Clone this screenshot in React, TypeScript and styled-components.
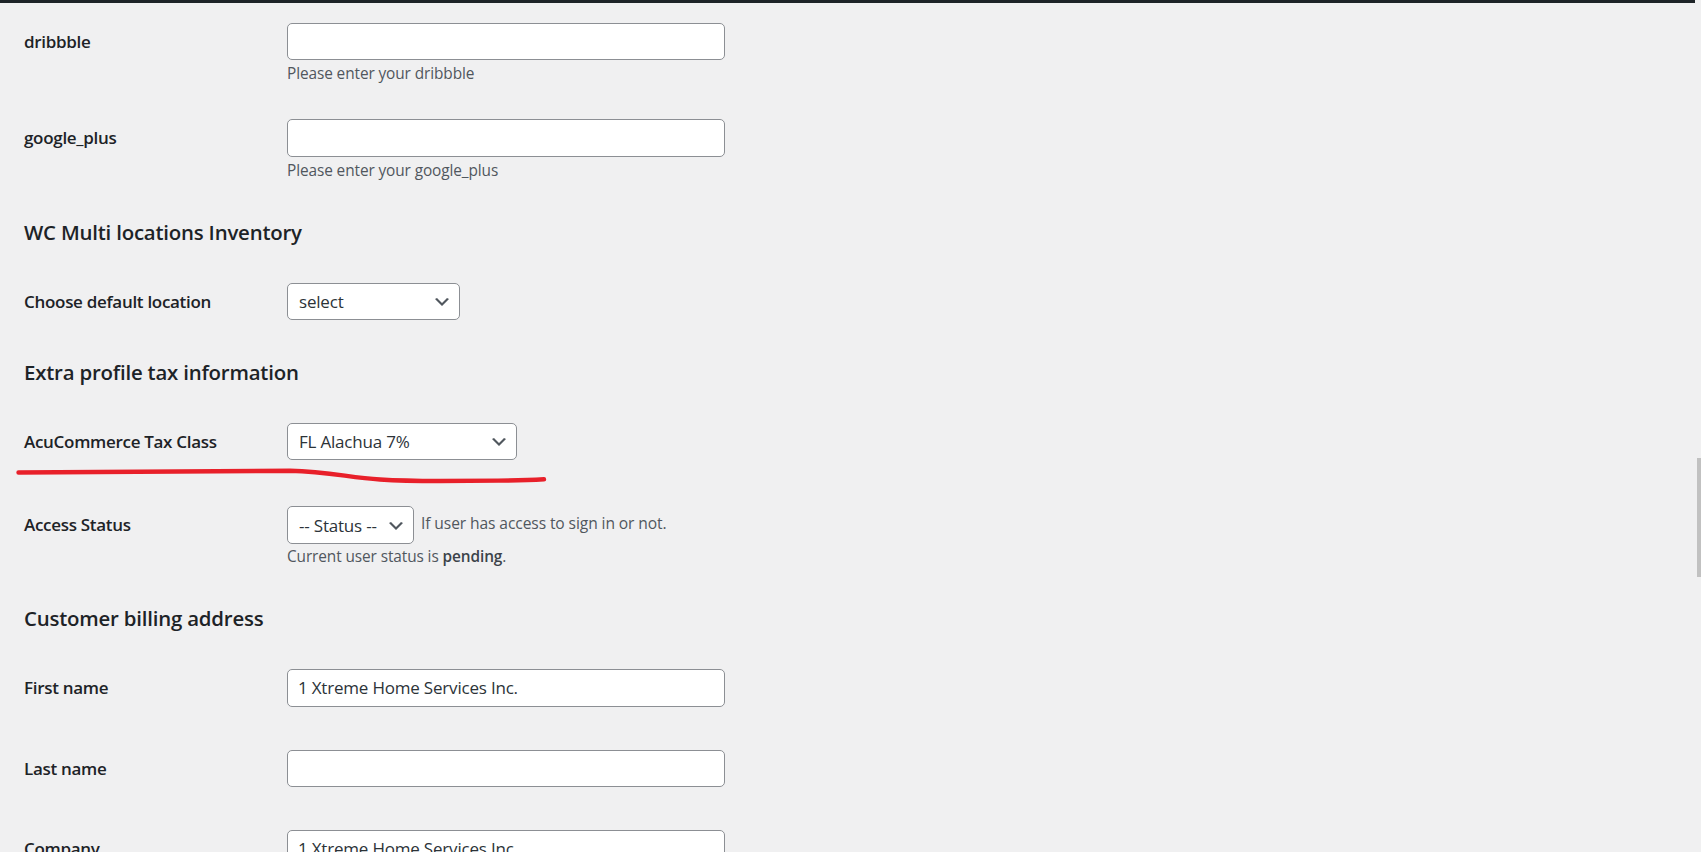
import styled, { createGlobalStyle } from "styled-components";

const GlobalStyle = createGlobalStyle`
  html, body {
    margin: 0;
    padding: 0;
    background: #f0f0f1;
    overflow: hidden;
  }
  body {
    font-family: "Open Sans", "Noto Sans", sans-serif;
    color: #1d2327;
  }
`;

const Chevron = () => (
  <svg width="20" height="20" viewBox="0 0 20 20" aria-hidden="true">
    <path d="M5 6l5 5 5-5 2 1-7 7-7-7 2-1z" fill="#50575e" />
  </svg>
);

export default function App() {
  return (
    <Page>
      <GlobalStyle />
      <AdminBarEdge />
      <Content>
        <Row $pt={19.5} $pb={15}>
          <Label>dribbble</Label>
          <Field>
            <TextInput type="text" defaultValue="" />
            <Description>Please enter your dribbble</Description>
          </Field>
        </Row>
        <Row $pt={19} $pb={17.25}>
          <Label>google_plus</Label>
          <Field>
            <TextInput type="text" defaultValue="" />
            <Description>Please enter your google_plus</Description>
          </Field>
        </Row>

        <SectionTitle>WC Multi locations Inventory</SectionTitle>
        <Row $pt={18.5} $pb={17.4}>
          <Label>Choose default location</Label>
          <Field>
            <SelectBox $width={173}>
              <span>select</span>
              <Chevron />
            </SelectBox>
          </Field>
        </Row>

        <SectionTitle>Extra profile tax information</SectionTitle>
        <Row $pt={19} $pb={18.5}>
          <Label>AcuCommerce Tax Class</Label>
          <Field>
            <SelectBox $width={230}>
              <span>FL Alachua 7%</span>
              <Chevron />
            </SelectBox>
          </Field>
        </Row>
        <Row $pt={17.5} $pb={15.5} $gap={8.4}>
          <Label>Access Status</Label>
          <Field>
            <ControlLine>
              <SelectBox $width={127} $height={38}>
                <span>-- Status --</span>
                <Chevron />
              </SelectBox>
              <InlineNote>If user has access to sign in or not.</InlineNote>
            </ControlLine>
            <StatusNote>
              Current user status is <strong>pending</strong>.
            </StatusNote>
          </Field>
        </Row>

        <SectionTitle>Customer billing address</SectionTitle>
        <Row $pt={19} $pb={21}>
          <Label>First name</Label>
          <Field>
            <TextInput type="text" defaultValue="1 Xtreme Home Services Inc." />
          </Field>
        </Row>
        <Row $pt={21} $pb={21}>
          <Label>Last name</Label>
          <Field>
            <TextInput type="text" defaultValue="" />
          </Field>
        </Row>
        <Row $pt={21} $pb={21}>
          <Label>Company</Label>
          <Field>
            <TextInput type="text" defaultValue="1 Xtreme Home Services Inc." />
          </Field>
        </Row>
      </Content>

      {/* hand drawn red underline from the screenshot */}
      <Annotation width="560" height="30" viewBox="0 0 560 30">
        <path
          d="M18.5 12.5 L290 10.8 C330 11.5 350 18 380 19.5 C400 20.8 420 21 440 21 L498 20.6 C520 20.4 535 19.8 544 19.3"
          fill="none"
          stroke="#e8202a"
          strokeWidth="4.4"
          strokeLinecap="round"
          strokeLinejoin="round"
        />
      </Annotation>
      <ScrollThumb />
    </Page>
  );
}

const Page = styled.div`
  position: relative;
  width: 100vw;
  height: 852px;
  overflow: hidden;
`;

const AdminBarEdge = styled.div`
  height: 3px;
  margin-right: 6px;
  background: #1d2327;
`;

const Content = styled.div`
  padding-left: 24px;
`;

const Row = styled.div<{ $pt: number; $pb: number; $gap?: number }>`
  display: grid;
  grid-template-columns: 263px auto;
  align-items: start;
  padding: ${(p) => p.$pt}px 0 ${(p) => p.$pb}px;
  margin-top: ${(p) => p.$gap ?? 0}px;
`;

const Label = styled.div`
  font-size: 17px;
  font-weight: 600;
  letter-spacing: -0.3px;
  line-height: 38.5px;
  color: #1d2327;
`;

const Field = styled.div`
  display: flex;
  flex-direction: column;
  align-items: flex-start;
`;

const TextInput = styled.input`
  box-sizing: border-box;
  width: 438px;
  height: 37.5px;
  margin: 0;
  padding: 0 10px;
  border: 1px solid #8c8f94;
  border-radius: 5px;
  background: #fff;
  font-family: "Open Sans", "Noto Sans", sans-serif;
  font-size: 17px;
  letter-spacing: -0.2px;
  color: #2c3338;
  outline: none;
`;

const Description = styled.p`
  margin: 2px 0 0;
  font-size: 15.4px;
  line-height: 23px;
  letter-spacing: -0.1px;
  color: #50575e;
`;

const SelectBox = styled.div<{ $width: number; $height?: number }>`
  box-sizing: border-box;
  display: flex;
  align-items: center;
  justify-content: space-between;
  width: ${(p) => p.$width}px;
  height: ${(p) => p.$height ?? 37}px;
  padding: 0 7px 0 11px;
  border: 1px solid #8c8f94;
  border-radius: 5px;
  background: #fff;
  font-size: 17px;
  letter-spacing: -0.2px;
  color: #2c3338;
  white-space: nowrap;

  svg {
    flex: none;
    margin-top: 1px;
  }
`;

const ControlLine = styled.div`
  display: flex;
  align-items: center;
  gap: 7px;
`;

const InlineNote = styled.span`
  font-size: 15.6px;
  letter-spacing: -0.1px;
  color: #50575e;
  margin-top: -4.5px;
`;

const StatusNote = styled.p`
  margin: 1px 0 0;
  font-size: 15.4px;
  line-height: 24px;
  letter-spacing: -0.1px;
  color: #50575e;

  strong {
    font-weight: 600;
    color: #3c434a;
  }
`;

const SectionTitle = styled.h2`
  margin: 20px 0 18.5px;
  font-size: 20.4px;
  font-weight: 600;
  line-height: 27px;
  letter-spacing: -0.2px;
  color: #1d2327;
`;

const Annotation = styled.svg`
  position: absolute;
  left: 0;
  top: 460px;
  pointer-events: none;
`;

const ScrollThumb = styled.div`
  position: absolute;
  right: 0;
  top: 458px;
  width: 4px;
  height: 119px;
  background: #c1c1c1;
`;
